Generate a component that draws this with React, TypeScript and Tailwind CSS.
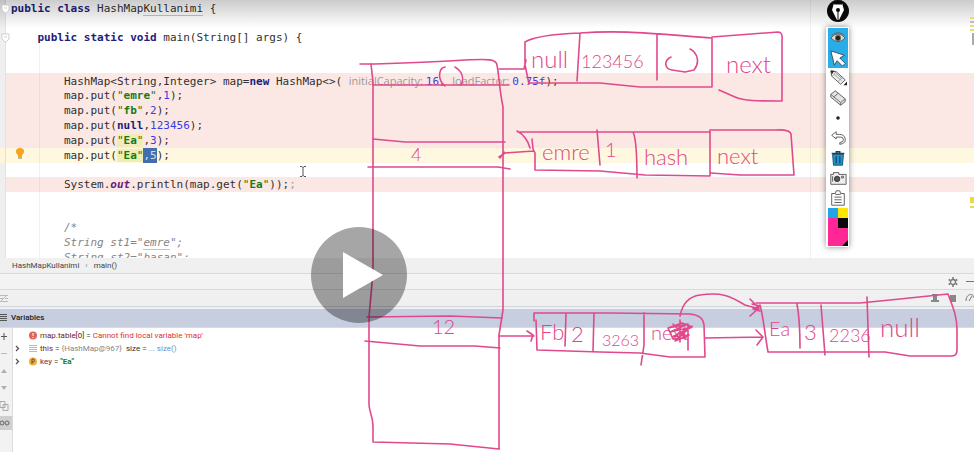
import type { ReactNode } from "react";

const Kw = ({ children }: { children: ReactNode }) => (
  <b className="font-bold text-[#1d1d7c]">{children}</b>
);
const Str = ({ children }: { children: ReactNode }) => (
  <span className="text-[#177a17]">
    "<b>{children}</b>"
  </span>
);
const Num = ({ children }: { children: ReactNode }) => (
  <span className="text-[#3c3ce0]">{children}</span>
);
const Hint = ({ children }: { children: ReactNode }) => (
  <span className="font-['Open_Sans',sans-serif] text-[11px] text-[#999]">{children}</span>
);

type LineProps = { children?: ReactNode; tone?: "break" | "current" };

function Line({ children, tone }: LineProps) {
  const bg = tone === "break" ? "bg-[#fbe8e5]" : tone === "current" ? "bg-[#fff8e0]" : "";
  return <div className={`h-[15px] pl-[5px] leading-[15px] whitespace-pre ${bg}`}>{children}</div>;
}
const Gap = () => <div className="h-[14px]" />;

function Editor() {
  return (
    <section
      aria-label="Editor"
      className="relative flex h-[258px] overflow-hidden bg-white font-['DejaVu_Sans_Mono',monospace] text-[11px] text-[#303030]"
    >
      <div className="flex w-[6px] shrink-0 flex-col border-r border-[#e2e2e2] bg-[#efefef] pt-[148px]">
        <div className="h-[15px] bg-[#fff5d8]" />
      </div>
      <div className="min-w-0 flex-1 pt-px">
        <Line>
          <Kw>public class</Kw> HashMap<span className="border-b border-[#c4c4c4]">Kullanimi</span> {"{"}
        </Line>
        <Gap />
        <Line>
          {"    "}<Kw>public static void</Kw> main(String[] args) {"{"}
        </Line>
        <Gap />
        <Gap />
        <Line tone="break">
          {"        "}HashMap&lt;String,Integer&gt; map=<Kw>new</Kw> HashMap&lt;&gt;({" "}
          <Hint>initialCapacity: </Hint><Num>16</Num>, <Hint>loadFactor: </Hint>
          <Num>0.75f</Num>);
        </Line>
        <Line tone="break">{"        "}map.put(<Str>emre</Str>,<Num>1</Num>);</Line>
        <Line tone="break">{"        "}map.put(<Str>fb</Str>,<Num>2</Num>);</Line>
        <Line tone="break">{"        "}map.put(<Kw>null</Kw>,<Num>123456</Num>);</Line>
        <Line tone="break">
          {"        "}map.put(<span className="bg-[#f3ebbb]"><Str>Ea</Str></span>,<Num>3</Num>);
        </Line>
        <Line tone="current">
          {"        "}map.put(<span className="bg-[#eeeeb0]"><Str>Ea</Str></span>
          <span className="inline-block bg-[#426eab] text-[#cfe0f5]">,5</span>);
        </Line>
        <Gap />
        <Line tone="break">
          {"        "}System.<b className="text-[#66217c] italic">out</b>.println(map.get(<Str>Ea</Str>));
          <span className="text-[#999]">;</span>
        </Line>
        <Gap />
        <Gap />
        <div className="text-[#858585] italic">
          <Line>{"        "}/*</Line>
          <Line>
            {"        "}String st1="<span className="border-b border-[#c4c4c4]">emre</span>";
          </Line>
          <Line>{"        "}String st2="hasan";</Line>
        </div>
      </div>
      <div className="absolute top-[38px] bottom-0 left-[39px] w-px bg-black/5" />
      <div className="absolute inset-y-0 left-[810px] w-px bg-black/5" />
      <div className="absolute inset-x-0 top-0 h-[28px] bg-linear-to-b from-black/20 to-transparent" />
      <svg className="absolute top-0 left-0" width="30" height="165" aria-hidden="true">
        <g fill="#fff" stroke="#cfcfcf">
          <path d="M2 5h7v5l-3 3H5L2 10zM2 34h7v5l-3 3H5L2 39z" />
          <path d="M4 8h3M4 37h3" />
        </g>
        <path d="M20 148c-5 0-5 5-2 7v2h4v-2c3-2 3-7-2-7z" fill="#f5a51d" />
        <path d="M18 158h4" stroke="#777" />
      </svg>
      <div className="absolute top-[17px] right-0 flex h-[28px] w-[4px] flex-col justify-between">
        <i className="h-[2px] bg-[#e9dd6f]" />
        <i className="h-[2px] bg-[#c8b7d0]" />
        <i className="h-[2px] bg-[#e9dd6f]" />
        <i className="h-[2px] bg-[#e9dd6f]" />
        <i className="ml-[2px] h-[12px] bg-[#aaa]" />
      </div>
      <div className="absolute top-[197px] right-0 h-[6px] w-[4px] bg-[#ecd94a]" />
      <div className="absolute top-[206px] right-0 h-[2px] w-[4px] bg-[#ecd94a]" />
      <svg className="absolute top-[165px] left-[299px]" width="8" height="13" fill="none" stroke="#555" aria-hidden="true">
        <path d="M1 1.500h2l1 1 1-1h2M4 2v9M1 11.500h2l1-1 1 1h2" />
      </svg>
    </section>
  );
}

function DebugPanel() {
  return (
    <>
      <nav className="flex h-[16px] items-center gap-[6px] border-b border-[#dadada] bg-[#f0f0f0] pl-[12px] text-[8px] text-[#444]">
        <span>HashMapKullanimi</span>
        <span className="text-[#888]">›</span>
        <span>main()</span>
      </nav>
      <div className="flex h-[16px] items-center justify-end gap-[8px] border-b border-[#dadada] bg-[#f3f3f3]">
        <button aria-label="Settings">
          <svg width="10" height="10" viewBox="0 0 10 10" fill="none" stroke="#777" aria-hidden="true">
            <circle cx="5" cy="5" r="2.500" strokeWidth="1.300" />
            <path d="M5 0v2M5 8v2M.7 2.500l1.700 1M7.600 6.500l1.700 1M.7 7.500l1.700-1M7.600 3.500l1.700-1" strokeWidth="1.500" />
          </svg>
        </button>
        <button aria-label="Hide" className="h-px w-[8px] bg-[#777]" />
      </div>
      <div className="flex h-[17px] items-center justify-between border-b border-[#cfd3dd] bg-[#f0f0f0]">
        <svg width="9" height="9" fill="none" stroke="#bbb" aria-hidden="true">
          <path d="M0 1.500h8M0 7.500h8M0 4.500h3M5 4.500h3M1 7l6-6" />
        </svg>
        <svg width="44" height="12" aria-hidden="true">
          <path d="M2 2h6v1H7v5h2v2H1V8h2V3H2zM20 3h6v7h-6z" fill="#888" />
          <path d="M36 9c0-8 8-8 8-3M39 9l3-5" fill="none" stroke="#777" />
        </svg>
      </div>
      <header className="mt-[2px] flex h-[19px] items-center gap-[4px] border-b border-[#d8dbe3] bg-[#c6cee0] text-[8px] font-medium text-[#222]">
        <svg width="7" height="8" stroke="#555" aria-hidden="true">
          <path d="M0 .5h7M0 2.500h7M0 4.500h7M0 6.500h7" />
        </svg>
        <h2>Variables</h2>
      </header>
      <div className="flex flex-1 bg-white">
        <div className="flex w-[13px] shrink-0 flex-col border-r border-[#dcdcdc] bg-[#f2f2f2]">
          <svg width="12" height="110" fill="none" aria-hidden="true">
            <path d="M1 8.500h6M4 5v7" stroke="#555" />
            <path d="M1 25.500h6" stroke="#bbb" />
            <path d="M1 45l3-4 3 4zM1 58l3 4 3-4z" fill="#b0b0b0" />
            <path d="M0 73.500h5v6H0zM3 76.500h5v6H3z" stroke="#aaa" />
            <path d="M0 88h12v14H0z" fill="#cfcfcf" />
            <circle cx="2" cy="95" r="2" stroke="#666" />
            <circle cx="7" cy="95" r="2" stroke="#666" />
          </svg>
        </div>
        <ul className="pt-px text-[8px] leading-[13px] text-[#333]">
          <li className="flex items-center gap-[3px] pl-[16px]">
            <svg width="8" height="9" aria-hidden="true">
              <circle cx="4" cy="4.500" r="4" fill="#e0655b" />
              <path d="M4 2v3M4 6v1" stroke="#fff" />
            </svg>
            <span>
              <span className="text-[#6f2020]">map.table[0]</span> = <span className="text-[#df2f2f]">Cannot find local variable 'map'</span>
            </span>
          </li>
          <li className="flex items-center gap-[3px] pl-[2px]">
            <Chevron />
            <svg width="8" height="7" stroke="#eeb649" aria-hidden="true">
              <path d="M0 .5h8M0 2.500h8M0 4.500h8M0 6.500h8" />
            </svg>
            <span className="whitespace-pre">
              <span className="text-[#802525]">this</span> = <span className="text-[#888]">{"{HashMap@967}"}</span>
              {"  "}size = <span className="text-[#6794c9]">... size()</span>
            </span>
          </li>
          <li className="flex items-center gap-[3px] pl-[2px]">
            <Chevron />
            <svg width="8" height="9" aria-hidden="true">
              <circle cx="4" cy="4.500" r="4" fill="#f1ad42" />
              <path d="M3 7V2h1a1 1 0 010 3H3" fill="none" stroke="#75501a" />
            </svg>
            <span>
              <span className="text-[#802525]">key</span> = <b className="text-[#187a18]">"Ea"</b>
            </span>
          </li>
        </ul>
      </div>
    </>
  );
}

const Chevron = () => (
  <svg className="mr-[6px]" width="5" height="7" fill="none" stroke="#555" aria-hidden="true">
    <path d="M1 1l2.500 2.500L1 6" strokeWidth="1.300" />
  </svg>
);

const notes = [
  { x: 531, y: 68, s: 24, t: "null" },
  { x: 581, y: 68, s: 18, t: "123456" },
  { x: 726, y: 73, s: 24, t: "next" },
  { x: 411, y: 161, s: 18, t: "4" },
  { x: 542, y: 160, s: 22, t: "emre" },
  { x: 605, y: 157, s: 20, t: "1" },
  { x: 644, y: 165, s: 22, t: "hash" },
  { x: 717, y: 164, s: 22, t: "next" },
  { x: 432, y: 334, s: 20, t: "12" },
  { x: 540, y: 340, s: 22, t: "Fb" },
  { x: 571, y: 342, s: 22, t: "2" },
  { x: 602, y: 346, s: 16, t: "3263" },
  { x: 651, y: 340, s: 20, t: "next" },
  { x: 769, y: 336, s: 20, t: "Ea" },
  { x: 804, y: 340, s: 22, t: "3" },
  { x: 829, y: 342, s: 18, t: "2236" },
  { x: 880, y: 337, s: 26, t: "null" },
];

function Ink() {
  return (
    <svg
      className="pointer-events-none absolute top-0 left-0"
      width="974"
      height="452"
      fill="none"
      stroke="#e0498c"
      strokeWidth="1.600"
      strokeLinecap="round"
      strokeLinejoin="round"
      aria-label="Bucket diagram"
    >
      <path d="M360 64h15c30-1 60-2 90-4 25-1 31-1 32 5 2 10 2 22 6 42v203l-4 25v114" />
      <path d="M371 64l2 18v190l-4 45v87c0 8 4 12 4 22v16l77 2 49 5" />
      <path d="M373 85h136M373 139l32 3h100M368 167h130l12 2M367 317l83-1 52 2M365 341l55 5h55l25 2" />
      <path d="M445 67c-6 1-7 10-3 16l3 3M455 67c8 5 9 12 6 18" />
      <path d="M499 69h25l2-9M525 42c8-5 30-8 55-9 40-3 65 0 132 5v49h-72l-40-4h-70M525 42v23l4 19M580 33l-3 48M657 34v46" />
      <path d="M671 57c-8 4-6 12 1 13l13 2 9-2c6-7 4-17-4-21M712 37l66-5q5 0 4 8v61c-25 0-38 0-47-4l-16-7" />
      <path d="M499 157l6-4 29-2M500 158l4-6M517 131c8 4 11 10 13 17M518 132h192M532 139l1 10 2 4v17l65 1 45 4 65 1v-46h65q15-1 16 4l3 41h-54l-29-2M597 130l3 35M633 132q4 8 4 46" />
      <path d="M499 336h35M527 331l6 4-2 6M534 321v-8h76l80 1q13 1 14 11l1 32h-35l-30-4-40-1-63-2-1-30M566 314l-1 32M594 313l-1 38M644 313v32l-3 20" />
      <path d="M680 316c3-15 12-20 20-21 22-3 30 1 45 10l14 4M750 299l9 9-9 8M752 304l8 2-7 3 7 2M705 338l58-1M756 330l7 7-6 8" />
      <path d="M668 328l20-4-18 8 22-5-20 10 17-2-14 6 15-15-8-3-14 5 5 11 13-1M680 320v22M688 325v25M673 324l13 13M692 326l-15 13" />
      <path d="M756 303h104l40-4 48-5c4 11 9 21 9 36v20q0 6-5 6h-42l-25-4H768c-3-17-5-37-8-47M797 304q3 16 3 44M821 305l4 50M867 297l2 60" />
      <g fill="#df478a" stroke="none" className="font-['Lato',sans-serif] font-light">
        {notes.map((n, i) => (
          <text key={i} x={n.x} y={n.y} fontSize={n.s}>
            {n.t}
          </text>
        ))}
      </g>
    </svg>
  );
}

const tools: { name: string; active?: boolean; art: ReactNode }[] = [
  {
    name: "Show",
    active: true,
    art: (
      <>
        <path d="M2 10q8-9 16 0-8 8-16 0z" fill="#ddd" stroke="#555" />
        <circle cx="10" cy="10" r="3" fill="#222" stroke="#776a5c" />
        <path d="M3 7q7-6 14 0" stroke="#666" />
      </>
    ),
  },
  {
    name: "Pointer",
    active: true,
    art: <path d="M2 2l15 5-5 3 6 6-3 3-6-6-3 5z" fill="#fff" stroke="#345" />,
  },
  {
    name: "Pencil",
    art: (
      <>
        <path d="M2 2l6 1 10 9-5 5L3 8z" fill="#eee" stroke="#555" />
        <path d="M8 3L4 8M15 9l-5 5M6 6l8 7M8 5l7 6" stroke="#999" />
        <path d="M2 2h4L3 6zM20 14v4h-4z" fill="#222" />
      </>
    ),
  },
  {
    name: "Eraser",
    art: (
      <>
        <path d="M2 6l5-4 11 9v3l-5 4L2 9z" fill="#e3e3e3" stroke="#555" />
        <path d="M2 6l11 9 5-4M13 15v3M5 9l5-4" stroke="#666" />
      </>
    ),
  },
  { name: "Pen size", art: <circle cx="10" cy="10" r="2" fill="#222" /> },
  {
    name: "Undo",
    art: <path d="M8 3L3 7l5 4V9h5q3 0 3 3t-4 3v2q7-1 6-6-1-5-6-5H8z" fill="#fff" stroke="#555" />,
  },
  {
    name: "Clear",
    art: (
      <>
        <path d="M4 6h12l-1 12H5z" fill="#2296d2" stroke="#164865" />
        <path d="M3 5h14M8 5V3h4v2M8 8v8M12 8v8" stroke="#164865" strokeWidth="1.500" />
      </>
    ),
  },
  {
    name: "Screenshot",
    art: (
      <>
        <path d="M2 6h3V4h6v2h8v11H2z" fill="#eee" stroke="#555" />
        <circle cx="9" cy="11" r="3" fill="#555" stroke="#333" />
        <path d="M14 8h2v2h-2zM4 8v6" stroke="#555" />
      </>
    ),
  },
  {
    name: "Clipboard",
    art: (
      <path d="M3 5h4l1-3h4l1 3h4v13H3zM7 6h6M6 9h8M6 12h8M6 15h8" fill="#fff" stroke="#555" />
    ),
  },
];

function PenToolbar() {
  return (
    <aside aria-label="Drawing tools" className="absolute top-0 left-[826px] flex w-[23px] flex-col items-center">
      <svg width="24" height="23" viewBox="0 0 24 23" aria-hidden="true">
        <circle cx="12" cy="11" r="11" fill="#080808" />
        <path d="M8 3h8l2 7-5 10h-2L6 10z" fill="#fff" />
        <path d="M8 1h8v3H8zM12 10v10" fill="#080808" stroke="#080808" />
        <circle cx="12" cy="10" r="2" fill="#080808" />
      </svg>
      <div className="mt-[4px] flex w-full flex-col items-center bg-white pt-px pb-px shadow-[0_0_6px_rgba(0,0,0,0.45)]">
        {tools.map((t) => (
          <button
            key={t.name}
            aria-label={t.name}
            className={`flex h-[20px] w-[20px] items-center justify-center ${t.active ? "bg-[#27aee8]" : ""}`}
          >
            <svg width="18" height="18" viewBox="0 0 20 20" fill="none" aria-hidden="true">
              {t.art}
            </svg>
          </button>
        ))}
        <svg width="20" height="38" aria-hidden="true">
          <path d="M0 0h20v38H0z" fill="#ff2795" />
          <path d="M0 0h10v10H0z" fill="#22a5e8" />
          <path d="M10 0h10v10H10z" fill="#ffe500" />
          <path d="M10 10h10v10H10zM20 32v6h-6z" fill="#080808" />
        </svg>
      </div>
    </aside>
  );
}

export default function App() {
  return (
    <main className="relative flex min-h-screen flex-col overflow-hidden bg-[#f0f0f0] font-['Roboto','Noto_Sans',sans-serif]">
      <Editor />
      <DebugPanel />
      <Ink />
      <PenToolbar />
      <button
        aria-label="Play video"
        className="absolute top-[227px] left-[311px] flex size-[96px] items-center justify-center rounded-full bg-black/35"
      >
        <svg className="ml-[8px]" width="40" height="46" aria-hidden="true">
          <path d="M0 0l40 23L0 46z" fill="#fff" />
        </svg>
      </button>
    </main>
  );
}
